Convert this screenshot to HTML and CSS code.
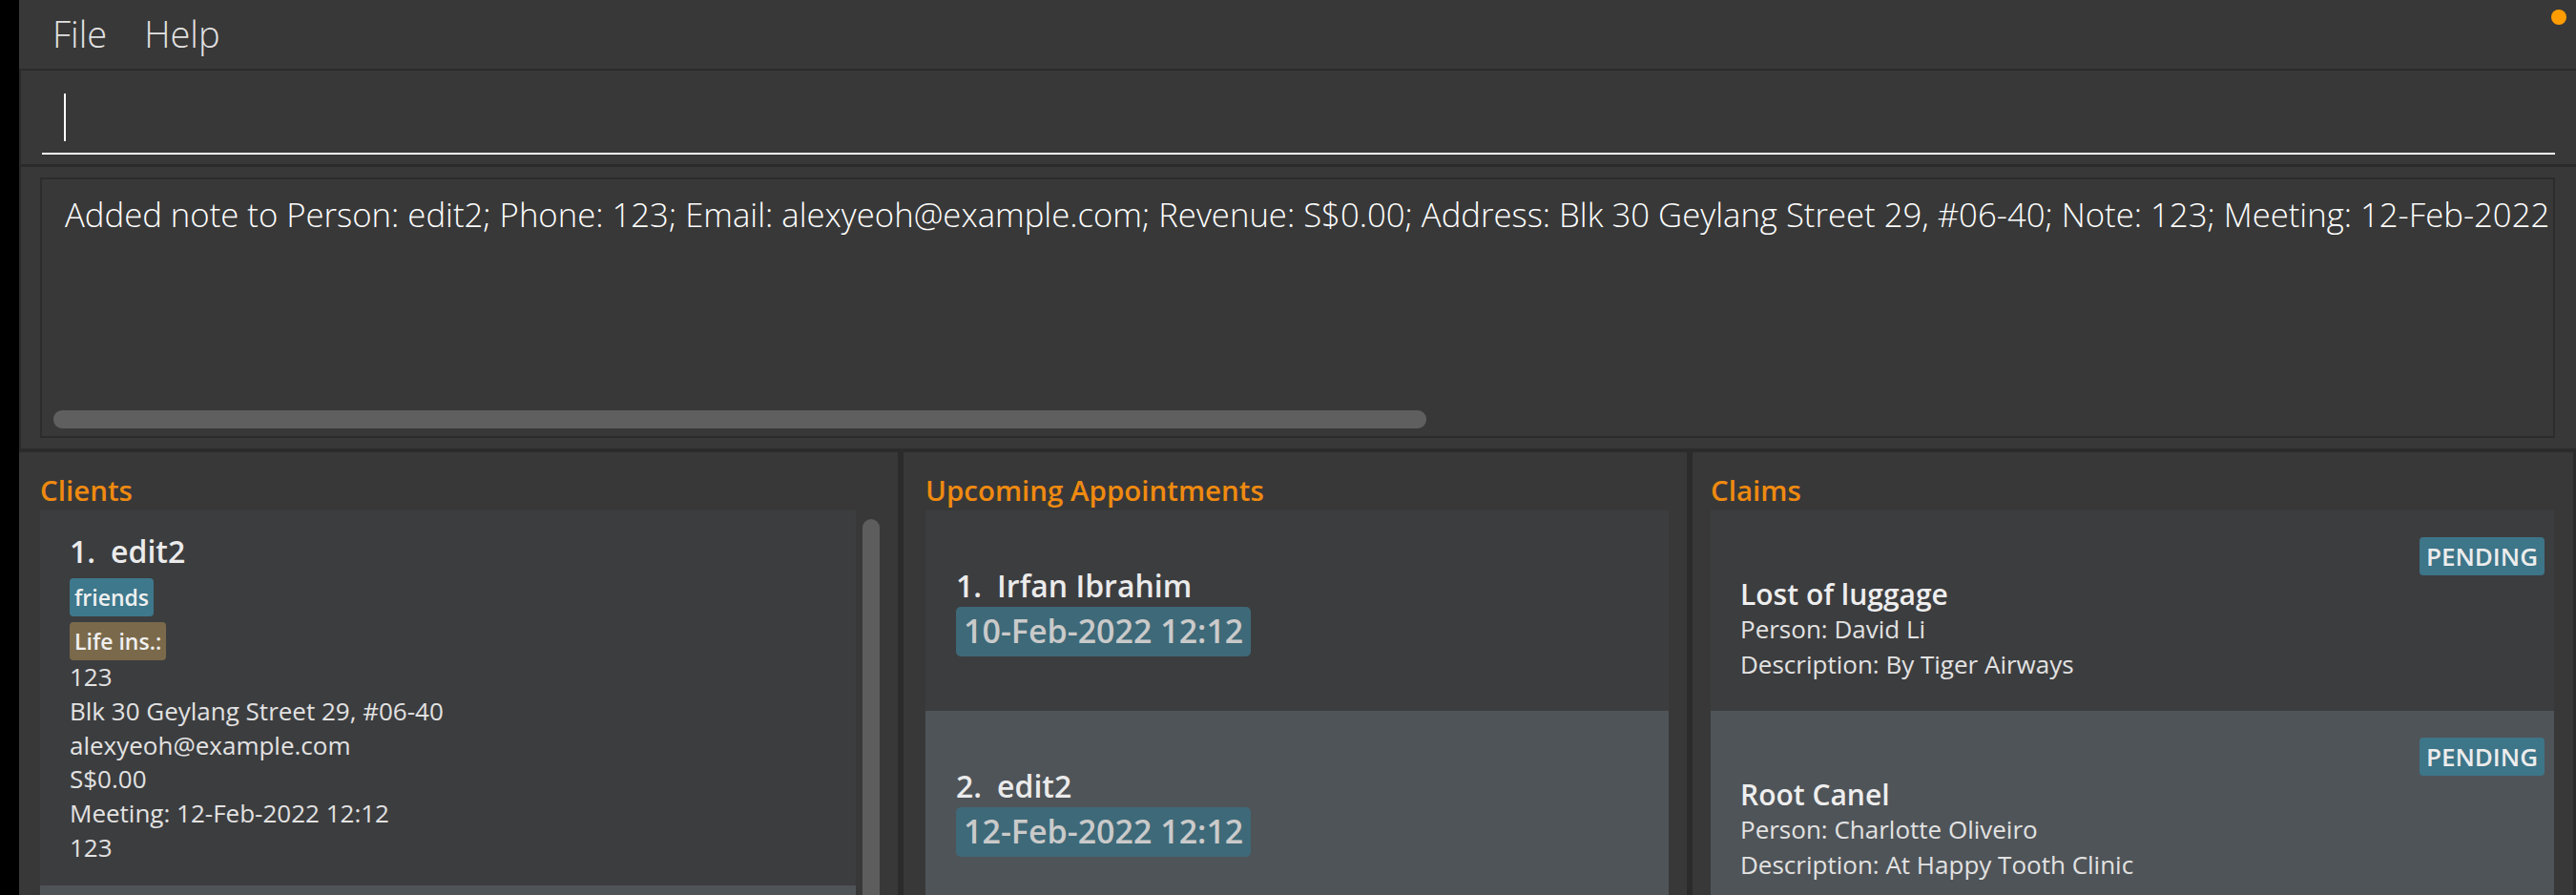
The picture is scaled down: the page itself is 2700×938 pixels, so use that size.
FILE: index.html
```html
<!DOCTYPE html>
<html lang="en">
<head>
<meta charset="utf-8">
<title>Insurance Book</title>
<link rel="stylesheet" href="styles.css">
</head>
<body>
<div class="window">
  <div class="menubar">
    <span class="menu-item">File</span>
    <span class="menu-item">Help</span>
    <span class="status-dot"></span>
  </div>
  <div class="command-box">
    <div class="command-field"><span class="caret"></span></div>
  </div>
  <div class="result-pane">
    <div class="result-box">
      <div class="result-text">Added note to Person: edit2; Phone: 123; Email: alexyeoh@example.com; Revenue: S$0.00; Address: Blk 30 Geylang Street 29, #06-40; Note: 123; Meeting: 12-Feb-2022 12:12</div>
      <div class="hscroll"></div>
    </div>
  </div>
  <div class="panels">
    <section class="panel panel-clients">
      <div class="panel-main">
        <h2 class="panel-title">Clients</h2>
        <div class="list">
          <div class="client-card">
            <div class="card-title"><span class="idx">1.</span>edit2</div>
            <span class="tag tag-blue">friends</span>
            <span class="tag tag-brown">Life ins.:</span>
            <div class="info">123</div>
            <div class="info">Blk 30 Geylang Street 29, #06-40</div>
            <div class="info">alexyeoh@example.com</div>
            <div class="info">S$0.00</div>
            <div class="info">Meeting: 12-Feb-2022 12:12</div>
            <div class="info">123</div>
          </div>
          <div class="client-card alt"></div>
        </div>
      </div>
      <div class="vscroll"><div class="vthumb"></div></div>
    </section>
    <div class="divider"></div>
    <section class="panel panel-appts">
      <h2 class="panel-title">Upcoming Appointments</h2>
      <div class="list">
        <div class="appt-card">
          <div class="card-title"><span class="idx">1.</span>Irfan Ibrahim</div>
          <span class="date-tag">10-Feb-2022 12:12</span>
        </div>
        <div class="appt-card alt">
          <div class="card-title"><span class="idx">2.</span>edit2</div>
          <span class="date-tag">12-Feb-2022 12:12</span>
        </div>
      </div>
    </section>
    <div class="divider"></div>
    <section class="panel panel-claims">
      <h2 class="panel-title">Claims</h2>
      <div class="list">
        <div class="claim-card">
          <span class="status-tag">PENDING</span>
          <div class="claim-title">Lost of luggage</div>
          <div class="info">Person: David Li</div>
          <div class="info">Description: By Tiger Airways</div>
        </div>
        <div class="claim-card alt">
          <span class="status-tag">PENDING</span>
          <div class="claim-title">Root Canel</div>
          <div class="info">Person: Charlotte Oliveiro</div>
          <div class="info">Description: At Happy Tooth Clinic</div>
        </div>
      </div>
    </section>
  </div>
</div>
</body>
</html>
```

FILE: styles.css
```css
* {
  box-sizing: border-box;
}

html, body {
  margin: 0;
  padding: 0;
  background: #000000;
  font-family: "Open Sans", "Noto Sans", "Liberation Sans", sans-serif;
}

body {
  width: 2700px;
  height: 938px;
  overflow: hidden;
  padding-left: 20px;
}

.window {
  width: 2680px;
  height: 938px;
  background: #383838;
  display: flex;
  flex-direction: column;
  overflow: hidden;
}

/* menu bar */
.menubar {
  height: 74px;
  flex: none;
  display: flex;
  align-items: center;
  gap: 39px;
  padding-left: 35px;
  padding-bottom: 2px;
  border-bottom: 2px solid #2b2b2b;
}

.menu-item {
  font-size: 38px;
  line-height: 50px;
  color: #e2e2e2;
  font-weight: 300;
}

.status-dot {
  margin-left: auto;
  align-self: flex-start;
  margin-top: 10px;
  margin-right: 10px;
  width: 16px;
  height: 16px;
  border-radius: 50%;
  background: #ff9d00;
}

/* command box */
.command-box {
  height: 101px;
  flex: none;
  border-left: 2px solid #2b2b2b;
  border-bottom: 3px solid #2b2b2b;
  padding: 24px 22px 0 22px;
}

.command-field {
  height: 64px;
  border-bottom: 2px solid #ffffff;
  padding-left: 23px;
}

.caret {
  display: block;
  width: 2px;
  height: 50px;
  background: #ffffff;
}

/* result display */
.result-pane {
  height: 299px;
  flex: none;
  border-left: 2px solid #2b2b2b;
  border-bottom: 4px solid #2b2b2b;
  padding: 11px 22px 11px 20px;
}

.result-box {
  height: 273px;
  border: 2px solid #2c2c2c;
  background: #383838;
  padding: 13px 0 8px 24px;
  display: flex;
  flex-direction: column;
  justify-content: space-between;
  overflow: hidden;
}

.result-text {
  font-size: 34.7px;
  line-height: 48px;
  font-weight: 300;
  color: #ffffff;
  white-space: nowrap;
}

.hscroll {
  margin-left: -12px;
  width: 1439px;
  height: 19px;
  border-radius: 9px;
  background: #5f5f5f;
}

/* panels */
.panels {
  flex: 1;
  display: flex;
  min-height: 0;
  overflow: hidden;
}

.divider {
  width: 6px;
  flex: none;
  background: #2b2b2b;
}

.panel {
  display: flex;
  flex-direction: column;
  min-width: 0;
  overflow: hidden;
}

.panel-clients {
  width: 921px;
  flex-direction: row;
  padding: 0 19px 0 22px;
}

.panel-main {
  flex: 1;
  display: flex;
  flex-direction: column;
  min-width: 0;
}

.vscroll {
  width: 18px;
  margin-left: 7px;
  padding-top: 70px;
  flex: none;
}

.vthumb {
  height: 600px;
  border-radius: 9px;
  background: #5d5d5d;
}

.panel-appts {
  width: 821px;
  padding: 0 19px 0 23px;
}

.panel-claims {
  flex: 1;
  padding: 0 20px 0 19px;
  border-right: 3px solid #2b2b2b;
}

.panel-title {
  margin: 0;
  padding-top: 19px;
  height: 62px;
  font-size: 29.5px;
  line-height: 42px;
  font-weight: 600;
  color: #ef8a10;
}

.list {
  flex: 1;
  background: #3c3d3f;
  display: flex;
  flex-direction: column;
}

.alt {
  background: #4f5458;
}

.card-title {
  font-size: 32px;
  line-height: 44px;
  font-weight: 600;
  color: #ebebeb;
  white-space: nowrap;
}

.idx {
  margin-right: 16px;
}

.info {
  font-size: 26px;
  line-height: 35.8px;
  color: #e2e2e2;
  white-space: nowrap;
}

/* client card */
.client-card {
  padding: 21px 31px 21px 31px;
  display: flex;
  flex-direction: column;
  align-items: flex-start;
  flex: none;
}

.client-card.alt {
  flex: 1;
  min-height: 200px;
}

.tag {
  display: block;
  height: 40px;
  margin-top: 6px;
  padding: 0 5px;
  border-radius: 4px;
  font-size: 23px;
  line-height: 40px;
  font-weight: 600;
  color: #f0f0f0;
}

.tag-blue {
  background: #3e788c;
}

.tag-brown {
  background: #7a6a4b;
}

/* appointment card */
.appt-card {
  height: 210px;
  flex: none;
  padding-left: 32px;
  display: flex;
  flex-direction: column;
  justify-content: center;
  align-items: flex-start;
}

.date-tag {
  display: block;
  height: 52px;
  padding: 0 8px 2px 8px;
  border-radius: 5px;
  background: #3e6978;
  color: #cacaca;
  font-size: 34px;
  line-height: 50px;
  font-weight: 600;
  white-space: nowrap;
}

/* claim card */
.claim-card {
  height: 210px;
  flex: none;
  padding: 28px 10px 0 31px;
  display: flex;
  flex-direction: column;
  align-items: flex-start;
}

.status-tag {
  align-self: flex-end;
  height: 40px;
  padding: 0 7px;
  border-radius: 4px;
  background: #3d7589;
  color: #ececec;
  font-size: 26px;
  line-height: 41px;
  font-weight: 600;
}

.claim-title {
  margin-top: 2px;
  font-size: 30px;
  line-height: 36px;
  font-weight: 600;
  color: #eeeeee;
}

.claim-card .info {
  line-height: 36.5px;
}
```
